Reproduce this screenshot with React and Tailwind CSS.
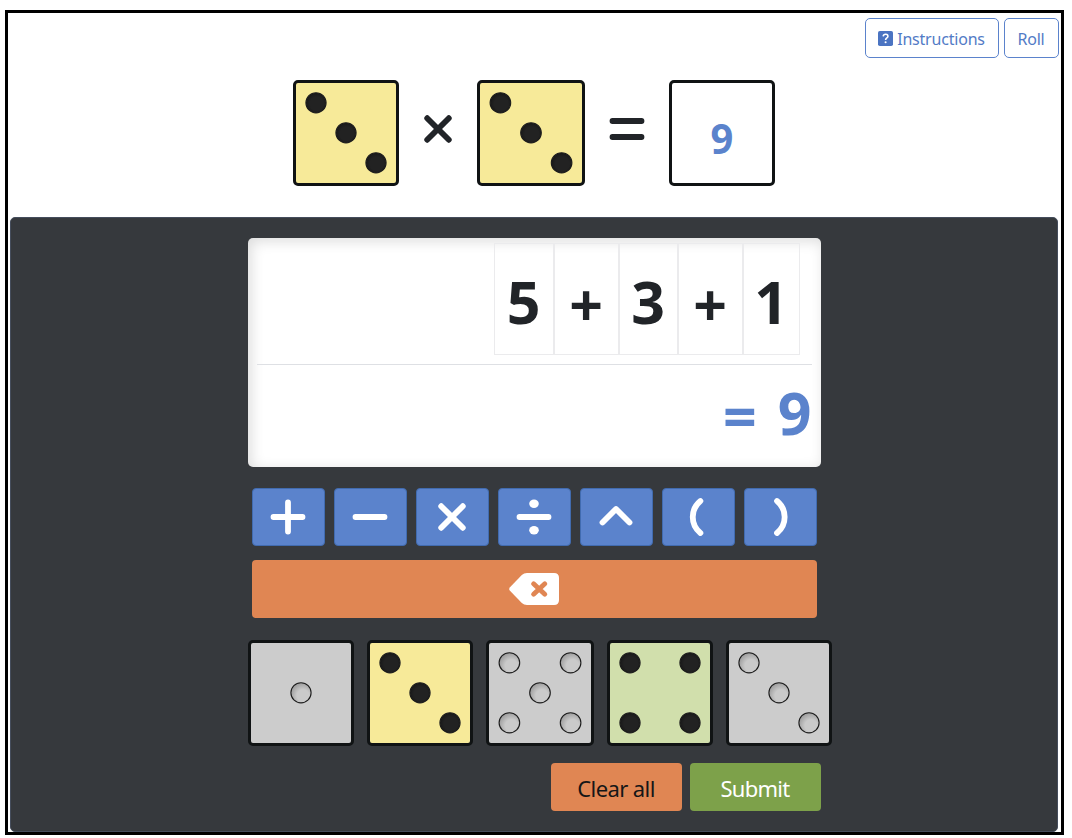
import React from 'react';

const PIPS = {
  1: [[50, 50]],
  3: [[20, 20], [50, 50], [80, 80]],
  4: [[20, 20], [80, 20], [20, 80], [80, 80]],
  5: [[20, 20], [80, 20], [50, 50], [20, 80], [80, 80]],
};

const DIE_COLORS = {
  yellow: 'bg-[#f7ea99]',
  green: 'bg-[#d1dfac]',
  used: 'bg-[#cccccc]',
};

function Die({ value, color, className = 'w-[106px]' }) {
  const used = color === 'used';
  return (
    <div className={`h-[106px] shrink-0 rounded-[5px] border-[3px] border-[#101314] ${DIE_COLORS[color]} ${className}`}>
      <svg className="block h-full w-full" viewBox="0 0 100 100" preserveAspectRatio="none">
        <defs>
          <radialGradient id="pip-used" cx="0.6" cy="0.64" r="0.66">
            <stop offset="0.45" stopColor="#cacaca" />
            <stop offset="1" stopColor="#9a9a9a" />
          </radialGradient>
          <radialGradient id="pip" cx="0.54" cy="0.55" r="0.56">
            <stop offset="0.6" stopColor="#222222" />
            <stop offset="1" stopColor="#171717" />
          </radialGradient>
        </defs>
        {PIPS[value].map(([cx, cy]) => (
          <circle
            key={`${cx}-${cy}`}
            cx={cx} cy={cy - 0.2} r="10.1"
            fill={used ? 'url(#pip-used)' : 'url(#pip)'}
            stroke="#1c1c1c" strokeWidth="1.1"
          />
        ))}
      </svg>
    </div>
  );
}

const GLYPHS = {
  plus: <path d="M20 5.5v29M5.5 20h29" />,
  minus: <path d="M5.5 20h29" />,
  times: <path d="M9.2 9.2l21.6 21.6M30.8 9.2L9.2 30.8" />,
  divide: (
    <>
      <path d="M5.5 20h29" />
      <ellipse cx="20" cy="6.7" rx="4.8" ry="4.2" fill="currentColor" stroke="none" />
      <ellipse cx="20" cy="33.3" rx="4.8" ry="4.2" fill="currentColor" stroke="none" />
    </>
  ),
  power: <path d="M6.5 25.5L20 12l13.5 13.5" />,
  open: <path d="M22.4 4C12.2 12.5 12.2 27.5 22.4 36" />,
  close: <path d="M17 4c10.2 8.5 10.2 23.5 0 32" />,
  equals: <path d="M5.5 12h29M5.5 28h29" />,
};

function Glyph({ name }) {
  return (
    <svg
      width="40" height="40" viewBox="0 0 40 40"
      fill="none" stroke="currentColor" strokeWidth="5.8"
      strokeLinecap="round" strokeLinejoin="round"
    >
      {GLYPHS[name]}
    </svg>
  );
}

function Toolbar() {
  return (
    <div className="mr-[2.5px] mt-[5px] flex h-10 justify-end gap-[5px] text-base tracking-[-0.2px] text-[#527bc6]">
      <button className="flex w-[134px] items-center justify-center gap-1 rounded-[5px] border border-[#5b83cc]">
        <svg width="15" height="15" viewBox="0 0 15 15">
          <rect width="15" height="15" rx="1.8" fill="#4b74c2" />
          <path d="M5.2 5.3c.4-2.9 4.8-2.6 4.7.1 0 1.5-2.3 1.7-2.3 3.5" fill="none" stroke="#fff" strokeWidth="1.6" />
          <circle cx="7.6" cy="11.2" r="1.05" fill="#fff" />
        </svg>
        <span className="pt-0.5">Instructions</span>
      </button>
      <button className="w-[55px] rounded-[5px] border border-[#5b83cc] pt-0.5">Roll</button>
    </div>
  );
}

function Equation() {
  return (
    <div className="ml-[285px] mt-[22px] flex h-[106px] items-center text-[#212428]">
      <Die value={3} color="yellow" />
      <div className="flex w-[78px] justify-center pb-2"><Glyph name="times" /></div>
      <Die value={3} color="yellow" className="w-[108px]" />
      <div className="flex w-[84px] justify-center pb-2"><Glyph name="equals" /></div>
      <div className="flex h-[106px] w-[106px] items-center justify-center rounded-[5px] border-[3px] border-[#101314] bg-white pt-2.5 text-[42px] font-bold leading-none text-[#5b83cc]">
        <span className="scale-x-95">9</span>
      </div>
    </div>
  );
}

const TOKENS = [
  { text: '5', width: 'w-[60px] pt-1' },
  { text: '+', width: 'w-[65px] pt-2.5' },
  { text: '3', width: 'w-[59px] pt-1' },
  { text: '+', width: 'w-[65px] pt-2.5' },
  { text: '1', width: 'w-[57px] pt-1' },
];

function Display() {
  return (
    <div className="h-[229px] w-[573px] rounded-[5px] bg-white px-[9px] pt-[5px] text-[59px] font-bold leading-none shadow-[inset_3px_3px_14px_rgba(0,0,0,0.14)]">
      <div className="flex h-[122px] justify-end border-b border-[#dee0e4] pr-[12px]">
        {TOKENS.map((token, i) => (
          <div
            key={i}
            className={`flex h-[112px] items-center justify-center border border-[#ebebed] text-[#212428] ${token.width}`}
          >
            {token.text}
          </div>
        ))}
      </div>
      <div className="flex justify-end gap-[21px] pt-[18px] text-[#5b83cc]">
        <span className="pt-[3px]">=</span>
        <span>9</span>
      </div>
    </div>
  );
}

function Keypad() {
  return (
    <div className="ml-[4px] mt-[21px] w-[565px]">
      <div className="grid h-[58px] grid-cols-7 gap-x-[9px]">
        {['plus', 'minus', 'times', 'divide', 'power', 'open', 'close'].map((name) => (
          <button key={name} className="flex items-center justify-center rounded-[4px] border border-[#416baf] bg-[#5b83cc] text-white">
            <Glyph name={name} />
          </button>
        ))}
      </div>
      <button className="mt-[14px] flex h-[58px] w-full items-center justify-center rounded-[4px] bg-[#e08653]">
        <svg width="50" height="32" viewBox="0 0 50 32">
          <path d="M1 14.2L12.8 2.1Q15 0 18 0H45Q50 0 50 5V27Q50 32 45 32H18Q15 32 12.8 29.9L1 17.8Q-.6 16 1 14.2Z" fill="#fff" />
          <path d="M24.6 10.8L35.8 21.2M35.8 10.8L24.6 21.2" stroke="#e08653" strokeWidth="4.9" strokeLinecap="round" />
        </svg>
      </button>
    </div>
  );
}

export default function App() {
  return (
    <div className="h-[838px] overflow-hidden bg-white pl-[5px] pt-[10px] font-['Noto_Sans','Open_Sans',sans-serif]">
      <div className="flex h-[825px] w-[1059px] flex-col border-[3px] border-black">
        <Toolbar />
        <Equation />
        <div className="ml-[2px] mr-[3px] mt-[30.5px] flex-1 rounded-[5px] border border-[#454d5c] bg-[#36393d] pl-[236.5px] pt-[20.5px]">
          <Display />
          <Keypad />
          <div className="mt-[22px] flex w-[584px] justify-between">
            <Die value={1} color="used" />
            <Die value={3} color="yellow" />
            <Die value={5} color="used" className="w-[108px]" />
            <Die value={4} color="green" />
            <Die value={3} color="used" />
          </div>
          <div className="mt-[17px] flex h-12 w-[573px] justify-end gap-2 text-[22px]">
            <button className="w-[131px] rounded-[4px] bg-[#e08653] pt-0.5 tracking-[-0.6px] text-[#151617]">Clear all</button>
            <button className="w-[131px] rounded-[4px] bg-[#7da14a] pt-0.5 tracking-[-0.7px] text-white">Submit</button>
          </div>
        </div>
      </div>
    </div>
  );
}
